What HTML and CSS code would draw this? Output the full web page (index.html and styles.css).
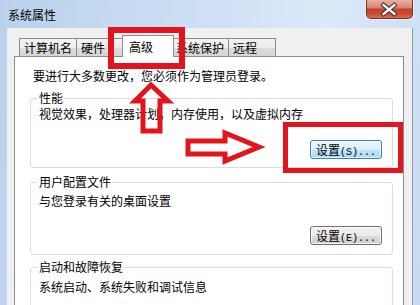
FILE: index.html
```html
<!DOCTYPE html>
<html lang="zh-CN">
<head>
<meta charset="utf-8">
<title>系统属性</title>
<link rel="stylesheet" href="styles.css">
</head>
<body>
<div class="window">
  <div class="titlebar">
    <span class="title">系统属性</span>
    <div class="close">
      <svg width="47" height="19" viewBox="0 0 47 19">
        <path d="M18 5 L29 14 M29 5 L18 14" stroke="#3a3a3a" stroke-width="4.6" stroke-linecap="square"/>
        <path d="M18 5 L29 14 M29 5 L18 14" stroke="#ffffff" stroke-width="2.4" stroke-linecap="square"/>
      </svg>
    </div>
  </div>
  <div class="client">
    <div class="tabs">
      <div class="tab">计算机名</div>
      <div class="tab">硬件</div>
      <div class="tab active">高级</div>
      <div class="tab">系统保护</div>
      <div class="tab">远程</div>
    </div>
    <div class="panel">
      <p class="notice">要进行大多数更改，您必须作为管理员登录。</p>
      <fieldset class="group g1">
        <legend>性能</legend>
        <p class="desc">视觉效果，处理器计划，内存使用，以及虚拟内存</p>
        <div class="actions"><button class="btn hot">设置<span class="mn">(S)...</span></button></div>
      </fieldset>
      <fieldset class="group g2">
        <legend>用户配置文件</legend>
        <p class="desc">与您登录有关的桌面设置</p>
        <div class="actions"><button class="btn">设置<span class="mn">(E)...</span></button></div>
      </fieldset>
      <fieldset class="group g3">
        <legend>启动和故障恢复</legend>
        <p class="desc">系统启动、系统失败和调试信息</p>
      </fieldset>
    </div>
  </div>
  <svg class="marks" width="420" height="305" viewBox="0 0 420 305">
    <g fill="none" stroke="#e3141d" stroke-linejoin="miter">
      <rect x="111" y="30" width="71" height="36" stroke-width="6"/>
      <rect x="285.5" y="124.5" width="115" height="46" stroke-width="5"/>
      <polygon points="151,85 168,101 160,101 160,131 143,131 143,101 135,101" stroke-width="5"/>
      <polygon points="188,141 225,141 225,133 259,147 225,161 225,154 188,154" stroke-width="5"/>
    </g>
  </svg>
</div>
</body>
</html>
```

FILE: styles.css
```css
* { box-sizing: border-box; }

html, body {
  margin: 0;
  padding: 0;
}

body {
  width: 420px;
  height: 305px;
  overflow: hidden;
  font-family: "Noto Sans CJK SC", "Noto Sans", sans-serif;
  font-size: 12px;
  color: #000;
  background: #c4d9f0;
}

.window {
  position: relative;
  width: 420px;
  height: 305px;
  overflow: hidden;
  background: linear-gradient(100deg, #b9d1ec 0%, #cfe0f5 45%, #dce9f8 70%, #c6dbf1 100%);
}

.titlebar {
  height: 28px;
  display: flex;
  justify-content: space-between;
  align-items: flex-start;
}

.title {
  padding-left: 8px;
  padding-top: 1px;
  line-height: 28px;
}

.close {
  width: 47px;
  height: 19px;
  margin-right: 7px;
  border: 1px solid #7a2e22;
  border-top: none;
  border-radius: 0 0 5px 5px;
  background: linear-gradient(#eab0a4 0%, #dc8a77 40%, #c64128 52%, #c64a31 75%, #d9704f 100%);
  box-shadow: 0 0 0 1px rgba(255,255,255,0.55);
  display: flex;
}

.close svg { display: block; margin-left: -1px; }

.client {
  width: 406px;
  height: 277px;
  margin-left: 7px;
  padding: 7px 8px 0 7px;
  background: #f0f0f0;
  border-right: 1px solid #8b9cb3;
  display: flex;
  flex-direction: column;
}

.tabs {
  display: flex;
  align-items: flex-end;
  padding-left: 5px;
  height: 21px;
  flex: none;
}

.tab {
  height: 18px;
  line-height: 18px;
  min-width: 47px;
  padding: 0 4px;
  border: 1px solid #898c95;
  border-bottom: none;
  background: linear-gradient(#f3f3f3 0%, #ececec 50%, #dedede 51%, #d4d4d4 100%);
  white-space: nowrap;
}

.tab + .tab { border-left: none; }

.tab.active {
  position: relative;
  z-index: 1;
  height: 22px;
  line-height: 21px;
  min-width: 52px;
  margin: 0 -2px -1px -2px;
  padding: 0 6px;
  border-left: 1px solid #898c95;
  background: #fff;
}

.tab.active + .tab { border-left: none; }

.panel {
  flex: 1;
  min-height: 0;
  overflow: hidden;
  background: #fff;
  border: 1px solid #898c95;
  border-bottom: none;
  padding-top: 11px;
}

.notice {
  margin: 0;
  padding-left: 18px;
  line-height: 16px;
}

.group {
  margin: 7px 10px 0 15px;
  padding: 0 10px 8px 8px;
  border: 1px solid #d5dfe5;
  border-radius: 3px;
  min-width: 0;
}

.group legend {
  margin-left: -2px;
  padding: 0 2px;
  line-height: 14px;
}

.desc {
  margin: 0;
  line-height: 16px;
}

.actions {
  display: flex;
  justify-content: flex-end;
  margin-top: 19px;
}

.g1 .desc { padding-top: 1px; }
.g1 .actions { margin-top: 18px; }

.g2 { margin-top: 7px; padding-bottom: 9px; }
.g2 .desc { padding-top: 4px; }
.g2 .actions { margin-top: 17px; }

.g3 { margin-top: 5px; padding-bottom: 30px; }
.g3 .desc { padding-top: 5px; }

.btn {
  width: 72px;
  height: 19px;
  padding: 0;
  font-family: "Noto Sans CJK SC", "Noto Sans", sans-serif;
  font-size: 12px;
  line-height: 17px;
  color: #000;
  border: 1px solid #707070;
  border-radius: 3px;
  background: linear-gradient(#f2f2f2 0%, #ebebeb 50%, #dddddd 51%, #cfcfcf 100%);
  box-shadow: inset 0 0 0 1px rgba(255,255,255,0.7);
}

.btn.hot {
  border-color: #3c7fb1;
  background: linear-gradient(#eaf6fd 0%, #d9f0fc 50%, #bee6fd 51%, #a7d9f5 100%);
}

.mn {
  font-family: "Liberation Mono", monospace;
  font-size: 10px;
}

.marks {
  position: absolute;
  left: 0;
  top: 0;
  pointer-events: none;
}
```
